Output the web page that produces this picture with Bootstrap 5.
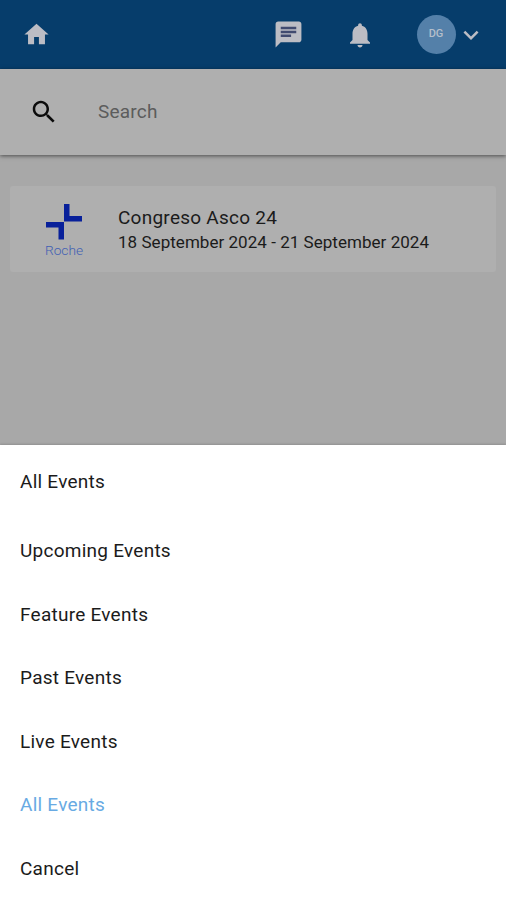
<!DOCTYPE html>
<html lang="en">
<head>
<meta charset="utf-8">
<meta name="viewport" content="width=device-width, initial-scale=1">
<title>Events</title>
<link href="https://cdn.jsdelivr.net/npm/bootstrap@5.3.0/dist/css/bootstrap.min.css" rel="stylesheet">
<style>
body { font-family: Roboto, "Liberation Sans", sans-serif; background: #a8a8a8; color: #1b1b1b; height: 900px; overflow: hidden; }
svg { display: block; flex: none; }
.topbar { height: 69px; background: #063d6b; color: #bcbdc4; padding: 0 20.5px 0 22px; }
.avatar { width: 39px; height: 39px; background: #5480a9; color: #b4bfcb; font-size: 11px; font-weight: 500; margin-left: 42px; }
.searchbar { height: 86px; background: #afafaf; padding-left: 29px; box-shadow: 0 1px 4px rgba(0,0,0,.55); color: #0b0b0b; }
.searchbar input, .searchbar input:focus { background: transparent; color: #555; font-size: 19px; letter-spacing: .2px; margin: 1px 0 0 39px; box-shadow: none; }
.searchbar input::placeholder { color: #5c5c5c; opacity: 1; }
.event { margin: 31px 10px 0; height: 86px; background: #afafaf; border-radius: 3px; padding-left: 35px; }
.logo { width: 38px; margin-top: 18px; }
.logo-name { font-size: 13.7px; font-weight: 300; line-height: 17px; color: #3f60b4; margin-top: 2px; }
.event-text { margin: 20px 0 0 35px; white-space: nowrap; }
.event-title { font-size: 19px; line-height: 24px; letter-spacing: .25px; }
.event-date { font-size: 17px; line-height: 25px; letter-spacing: .04px; }
.sheet { height: 455px; background: #fff; font-size: 19px; letter-spacing: .25px; box-shadow: 0 -1px 2px rgba(0,0,0,.15); }
.sheet-title { height: 74px; padding-left: 20px; }
.sheet .list-group-item { height: 63.6px; padding: 1px 20px 0; color: #1b1b1b; }
.sheet .list-group-item.chosen { color: #68aae3; }
</style>
</head>
<body class="d-flex flex-column">
<nav class="topbar d-flex align-items-center flex-shrink-0">
  <svg width="29" height="29" viewBox="0 0 24 24" fill="currentColor"><path d="M10 20v-6h4v6h5v-8h3L12 3 2 12h3v8z"/></svg>
  <svg class="ms-auto" width="31" height="31" viewBox="0 0 24 24"><path fill="currentColor" d="M20 2H4c-1.100 0-2 .9-2 2v18l4-4h14c1.100 0 2-.9 2-2V4c0-1.100-.9-2-2-2z"/><path fill="#414b70" d="M6 6h12v2H6zM6 9h12v2H6zM6 12h8v2H6z"/></svg>
  <svg style="margin-left:41px" width="30" height="30" viewBox="0 0 24 24" fill="currentColor"><path d="M12 22c1.100 0 2-.9 2-2h-4c0 1.100.9 2 2 2zm6-6v-5c0-3.070-1.640-5.640-4.500-6.320V4c0-.83-.67-1.500-1.500-1.500s-1.500.67-1.500 1.500v.68C7.630 5.360 6 7.920 6 11v5l-2 2v1h16v-1l-2-2z"/></svg>
  <div class="avatar rounded-circle d-flex align-items-center justify-content-center">DG</div>
  <svg width="30" height="30" viewBox="0 0 24 24" fill="currentColor"><path d="M16.590 8.590L12 13.170 7.410 8.590 6 10l6 6 6-6z"/></svg>
</nav>
<div class="searchbar d-flex align-items-center flex-shrink-0">
  <svg width="30" height="30" viewBox="0 0 24 24" fill="currentColor"><path d="M15.500 14h-.79l-.28-.27C15.410 12.590 16 11.110 16 9.500 16 5.910 13.090 3 9.500 3S3 5.910 3 9.500 5.910 16 9.500 16c1.610 0 3.090-.59 4.230-1.570l.27.28v.79l5 4.990L20.490 19l-4.990-5zm-6 0C7.010 14 5 11.990 5 9.500S7.010 5 9.500 5 14 7.010 14 9.500 11.990 14 9.500 14z"/></svg>
  <input class="form-control border-0 p-0 w-50" type="text" placeholder="Search" aria-label="Search">
</div>
<div class="event d-flex flex-shrink-0">
  <div class="logo d-flex flex-column align-items-center">
    <svg width="36" height="36" viewBox="0 0 36 36" fill="#08209a"><path d="M18 0h5.500v12H36v5.500H18zM0 18h18v17.500h-5.500V23.500H0z"/></svg>
    <div class="logo-name">Roche</div>
  </div>
  <div class="event-text">
    <div class="event-title">Congreso Asco 24</div>
    <div class="event-date">18 September 2024 - 21 September 2024</div>
  </div>
</div>
<div class="sheet mt-auto flex-shrink-0">
  <div class="sheet-title d-flex align-items-center">All Events</div>
  <div class="list-group list-group-flush">
    <a class="list-group-item border-0 d-flex align-items-center">Upcoming Events</a>
    <a class="list-group-item border-0 d-flex align-items-center">Feature Events</a>
    <a class="list-group-item border-0 d-flex align-items-center">Past Events</a>
    <a class="list-group-item border-0 d-flex align-items-center">Live Events</a>
    <a class="list-group-item border-0 d-flex align-items-center chosen">All Events</a>
    <a class="list-group-item border-0 d-flex align-items-center">Cancel</a>
  </div>
</div>
<script src="https://cdn.jsdelivr.net/npm/bootstrap@5.3.0/dist/js/bootstrap.bundle.min.js"></script>
</body>
</html>
